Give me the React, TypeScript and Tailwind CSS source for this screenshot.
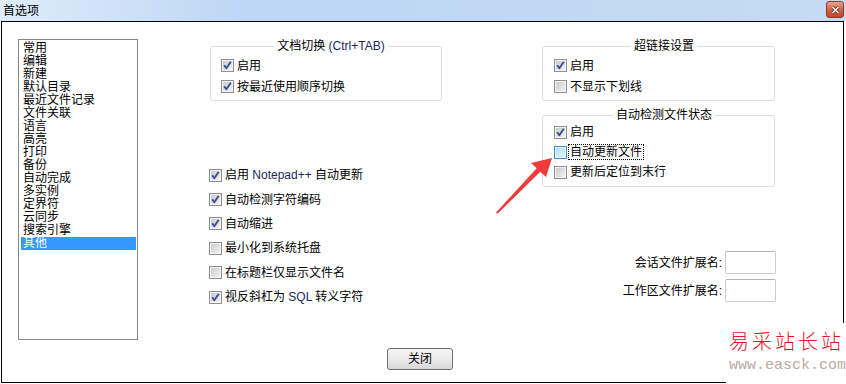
import React from "react";

function Box({ checked, hover }: { checked?: boolean; hover?: boolean }) {
  return (
    <span
      className={
        hover
          ? "relative flex w-[13px] h-[13px] shrink-0 border border-[#3d8ccc] bg-[#eaf6fd] p-[1px]"
          : "relative flex w-[13px] h-[13px] shrink-0 border border-[#8e8f8f] bg-[#f4f4f4] p-[1px]"
      }
    >
      <span
        className={
          hover
            ? "block w-full h-full bg-linear-to-br from-[#b4ddf8] to-[#e4f4fe]"
            : "block w-full h-full bg-linear-to-br from-[#cbcbcb] to-[#f2f2f2]"
        }
      />
      {checked && (
        <svg className="absolute left-[-1px] top-[-1px]" width="13" height="13" viewBox="0 0 13 13">
          <path d="M3.2 6.2 L5.3 9.3 L9.8 2.8" fill="none" stroke="#3a4e95" strokeWidth="1.9" strokeLinejoin="round" />
        </svg>
      )}
    </span>
  );
}

function Row({
  checked,
  hover,
  focus,
  h,
  children,
}: {
  checked?: boolean;
  hover?: boolean;
  focus?: boolean;
  h: string;
  children: React.ReactNode;
}) {
  return (
    <div className={`flex items-center gap-[3px] ${h}`}>
      <Box checked={checked} hover={hover} />
      {focus ? (
        <span className="ml-[-2px] border border-dotted border-black pl-[1px] pr-[1px] leading-[14px]">{children}</span>
      ) : (
        <span className="leading-[14px] whitespace-nowrap">{children}</span>
      )}
    </div>
  );
}

const L = ({ children }: { children: React.ReactNode }) => <span className="text-[#1f2658]">{children}</span>;

const items = [
  "常用",
  "编辑",
  "新建",
  "默认目录",
  "最近文件记录",
  "文件关联",
  "语言",
  "高亮",
  "打印",
  "备份",
  "自动完成",
  "多实例",
  "定界符",
  "云同步",
  "搜索引擎",
  "其他",
];

export default function App() {
  return (
    <div
      className="relative w-[846px] h-[384px] overflow-hidden bg-white text-[12px] text-black"
      style={{ fontFamily: '"Liberation Sans", "Noto Sans CJK SC", sans-serif' }}
    >
      {/* title bar */}
      <div className="flex h-[21px] justify-between bg-linear-to-r from-[#dfebfa] via-[#bcd6f4] via-30% to-[#c6dbf4] pl-[3px] pr-[2px]">
        <span className="self-center leading-[14px]">首选项</span>
        <div className="mt-[1px] flex h-[17px] w-[18px] items-center justify-center rounded-[3px] border border-[#8d3b27] bg-linear-to-b from-[#e9a48e] via-[#d2644a] to-[#c0432a]">
          <svg width="9" height="8" viewBox="0 0 9 8">
            <path d="M1.5 1 L7.5 7 M7.5 1 L1.5 7" stroke="#5a2418" strokeWidth="3" />
            <path d="M1.5 1 L7.5 7 M7.5 1 L1.5 7" stroke="#ffffff" strokeWidth="1.6" />
          </svg>
        </div>
      </div>

      {/* window body */}
      <div className="ml-[1px] flex h-[362px] w-[843px] flex-col border border-black">
        <div className="flex h-[318px]">
          {/* list */}
          <div className="ml-[16px] mt-[17px] h-[301px] w-[120px] border border-[#828790] p-[1px] pt-[2px]">
            {items.map((it) => (
              <div
                key={it}
                className={
                  it === "其他"
                    ? "ml-[1px] h-[13px] bg-[#3399ff] pl-[2px] leading-[13px] text-white"
                    : "ml-[1px] h-[13px] pl-[2px] leading-[13px]"
                }
              >
                {it}
              </div>
            ))}
          </div>

          {/* middle column */}
          <div className="ml-[71px] mt-[18px] flex w-[233px] flex-col">
            <fieldset className="ml-[1px] w-[232px] rounded-[3px] border border-[#d5dfe5] pb-[3px] pl-[10px] pt-[2px]">
              <legend className="mx-auto px-[3px] leading-[13px]">
                文档切换 <L>(Ctrl+TAB)</L>
              </legend>
              <Row checked h="h-[21px]">启用</Row>
              <Row checked h="h-[21px]">按最近使用顺序切换</Row>
            </fieldset>
            <div className="mt-[62px] flex flex-col">
              <Row checked h="h-[24.4px]">
                启用 <L>Notepad++</L> 自动更新
              </Row>
              <Row checked h="h-[24.4px]">自动检测字符编码</Row>
              <Row checked h="h-[24.4px]">自动缩进</Row>
              <Row h="h-[24.4px]">最小化到系统托盘</Row>
              <Row h="h-[24.4px]">在标题栏仅显示文件名</Row>
              <Row checked h="h-[24.4px]">
                视反斜杠为 <L>SQL</L> 转义字符
              </Row>
            </div>
          </div>

          {/* right column */}
          <div className="ml-[100px] mt-[18px] flex w-[234px] flex-col">
            <fieldset className="w-[233px] rounded-[3px] border border-[#d5dfe5] pb-[3px] pl-[11px] pt-[2px]">
              <legend className="mx-auto px-[3px] leading-[13px]">超链接设置</legend>
              <Row checked h="h-[21px]">启用</Row>
              <Row h="h-[21px]">不显示下划线</Row>
            </fieldset>
            <fieldset className="mt-[8px] w-[233px] rounded-[3px] border border-[#d5dfe5] pb-[4px] pl-[11px]">
              <legend className="mx-auto px-[3px] leading-[13px]">自动检测文件状态</legend>
              <Row checked h="h-[20px]">启用</Row>
              <Row hover focus h="h-[20px]">自动更新文件</Row>
              <Row h="h-[20px]">更新后定位到末行</Row>
            </fieldset>
            <div className="mt-[64px] flex h-[23px] items-center justify-end gap-[3px]">
              <span>会话文件扩展名:</span>
              <div className="h-[23px] w-[51px] rounded-[2px] border border-[#cacaca] border-t-[#b4b4b4] bg-white" />
            </div>
            <div className="mt-[5px] flex h-[23px] items-center justify-end gap-[3px]">
              <span>工作区文件扩展名:</span>
              <div className="h-[23px] w-[51px] rounded-[2px] border border-[#cacaca] border-t-[#b4b4b4] bg-white" />
            </div>
          </div>
        </div>

        {/* button */}
        <div className="mt-[8px] pl-[385px]">
          <button className="flex h-[22px] w-[66px] items-center justify-center rounded-[3px] border border-[#707070] bg-linear-to-b from-[#f3f3f3] via-[#ebebeb] via-50% to-[#d8d8d8] leading-[14px]">
            关闭
          </button>
        </div>
      </div>

      {/* red arrow annotation */}
      <svg className="pointer-events-none absolute left-0 top-0" width="846" height="384" viewBox="0 0 846 384">
        <polygon
          points="552,158 531,163 536.7,168.3 496,212.5 497.5,213.8 540.3,171.7 546,177"
          fill="#f13a3a"
        />
      </svg>

      {/* watermark */}
      <div className="absolute bottom-0 right-0 flex h-[61px] w-[120px] flex-col bg-white pl-[3px] pt-[6px]">
        <span className="whitespace-nowrap text-[20px] font-light leading-[26px] tracking-[3px] text-[#e8132b]">易采站长站</span>
        <span
          className="mt-[3px] whitespace-nowrap text-[15px] leading-[15px] text-[#b9a9a9]"
          style={{ fontFamily: '"Liberation Mono", monospace' }}
        >
          www.easck.com
        </span>
      </div>
    </div>
  );
}
